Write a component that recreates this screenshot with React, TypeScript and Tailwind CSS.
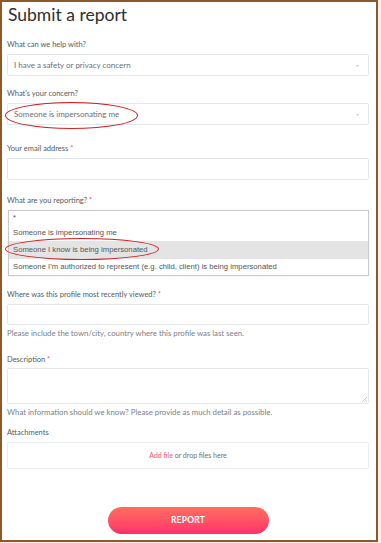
import React from 'react';

const font = { fontFamily: 'Lato, "Open Sans", sans-serif' };

function Label({ text, required }: { text: string; required?: boolean }) {
  return (
    <div className="text-[7.5px] leading-[10px] text-[#555a60]">
      {text}
      {required && <span className="text-[#ef5a6f]"> *</span>}
    </div>
  );
}

function Caret() {
  return (
    <svg width="3" height="2" viewBox="0 0 4 3" className="absolute right-[9px] top-[10px]">
      <path d="M0 0 L4 0 L2 3 Z" fill="#c4c7cc" />
    </svg>
  );
}

function Select({ value }: { value: string }) {
  return (
    <div className="relative h-[22px] border border-[#e4e7eb] rounded-[2px] flex items-center pl-[6px] text-[8px] text-[#6b6f75]">
      {value}
      <Caret />
    </div>
  );
}

function Input({ h = 22 }: { h?: number }) {
  return <div className={h === 22 ? 'h-[22px] border border-[#e4e7eb] rounded-[2px]' : 'h-[21px] border border-[#e4e7eb] rounded-[2px]'} />;
}

function Ellipse({ className }: { className: string }) {
  return <div className={'absolute border-[1.5px] border-[#d11f24] rounded-[50%] pointer-events-none ' + className} />;
}

export default function App() {
  const options = [
    '*',
    'Someone is impersonating me',
    'Someone I know is being impersonated',
    "Someone I'm authorized to represent (e.g. child, client) is being impersonated",
  ];

  return (
    <div className="w-[381px] h-[543px] bg-[#f6f2ec]" style={font}>
      <div className="relative w-[378px] h-[542px] border-2 border-[#8a5a2c] bg-white pl-[5px] pr-[7px]">
        <h1 className="text-[17.5px] leading-[24px] text-[#2b2e33] pl-[1px] pt-[1px]">Submit a report</h1>

        <div className="mt-[13px]">
          <Label text="What can we help with?" />
          <div className="mt-[4px]">
            <Select value="I have a safety or privacy concern" />
          </div>
        </div>

        <div className="mt-[13px]">
          <Label text="What's your concern?" />
          <div className="mt-[4px]">
            <Select value="Someone is impersonating me" />
          </div>
        </div>

        <div className="mt-[19px]">
          <Label text="Your email address" required />
          <div className="mt-[4px]">
            <Input />
          </div>
        </div>

        <div className="mt-[16px]">
          <Label text="What are you reporting?" required />
          <div
            className="mt-[4px] ml-[1px] border border-[#c9c9c9] shadow-[0_0_1px_rgba(0,0,0,0.15)] text-[7.7px] text-[#555]"
            style={{ fontFamily: '"Liberation Sans", Arial, sans-serif' }}
          >
            {options.map((o, i) => (
              <div
                key={o}
                className={
                  (i === 2 ? 'bg-[#e4e4e4] h-[18px] ' : i === 0 ? 'h-[14px] ' : 'h-[16px] ') +
                  'flex items-center pl-[4px]'
                }
              >
                {o}
              </div>
            ))}
          </div>
        </div>

        <div className="mt-[14px]">
          <Label text="Where was this profile most recently viewed?" required />
          <div className="mt-[4px]">
            <Input h={21} />
          </div>
          <div className="mt-[3px] text-[7.8px] leading-[10px] text-[#7a7e84]">
            Please include the town/city, country where this profile was last seen.
          </div>
        </div>

        <div className="mt-[17px]">
          <Label text="Description" required />
          <div className="mt-[3px] relative h-[36px] border border-[#e4e7eb] rounded-[2px]">
            <svg width="5" height="5" viewBox="0 0 5 5" className="absolute right-[1px] bottom-[1px]">
              <path d="M5 0 L0 5 M5 2.5 L2.5 5" stroke="#a8a8a8" strokeWidth="0.6" />
            </svg>
          </div>
          <div className="mt-[3px] text-[7.8px] leading-[10px] text-[#7a7e84]">
            What information should we know? Please provide as much detail as possible.
          </div>
        </div>

        <div className="mt-[11px]">
          <Label text="Attachments" />
          <div className="mt-[4px] h-[27px] border border-[#e9ecf1] rounded-[2px] flex items-center justify-center text-[7px] text-[#6b6f75]">
            <span className="text-[#f05a73]">Add file</span>&nbsp;or drop files here
          </div>
        </div>

        <div className="mt-[38px] flex justify-center">
          <button className="w-[161px] h-[27px] rounded-full bg-gradient-to-b from-[#ff6d5b] to-[#ff2e6c] text-white font-bold text-[8.5px] tracking-[0.2px]">
            REPORT
          </button>
        </div>

        <Ellipse className="left-[3px] top-[100px] w-[133px] h-[27px]" />
        <Ellipse className="left-[3px] top-[236px] w-[154px] h-[22px]" />
      </div>
    </div>
  );
}
